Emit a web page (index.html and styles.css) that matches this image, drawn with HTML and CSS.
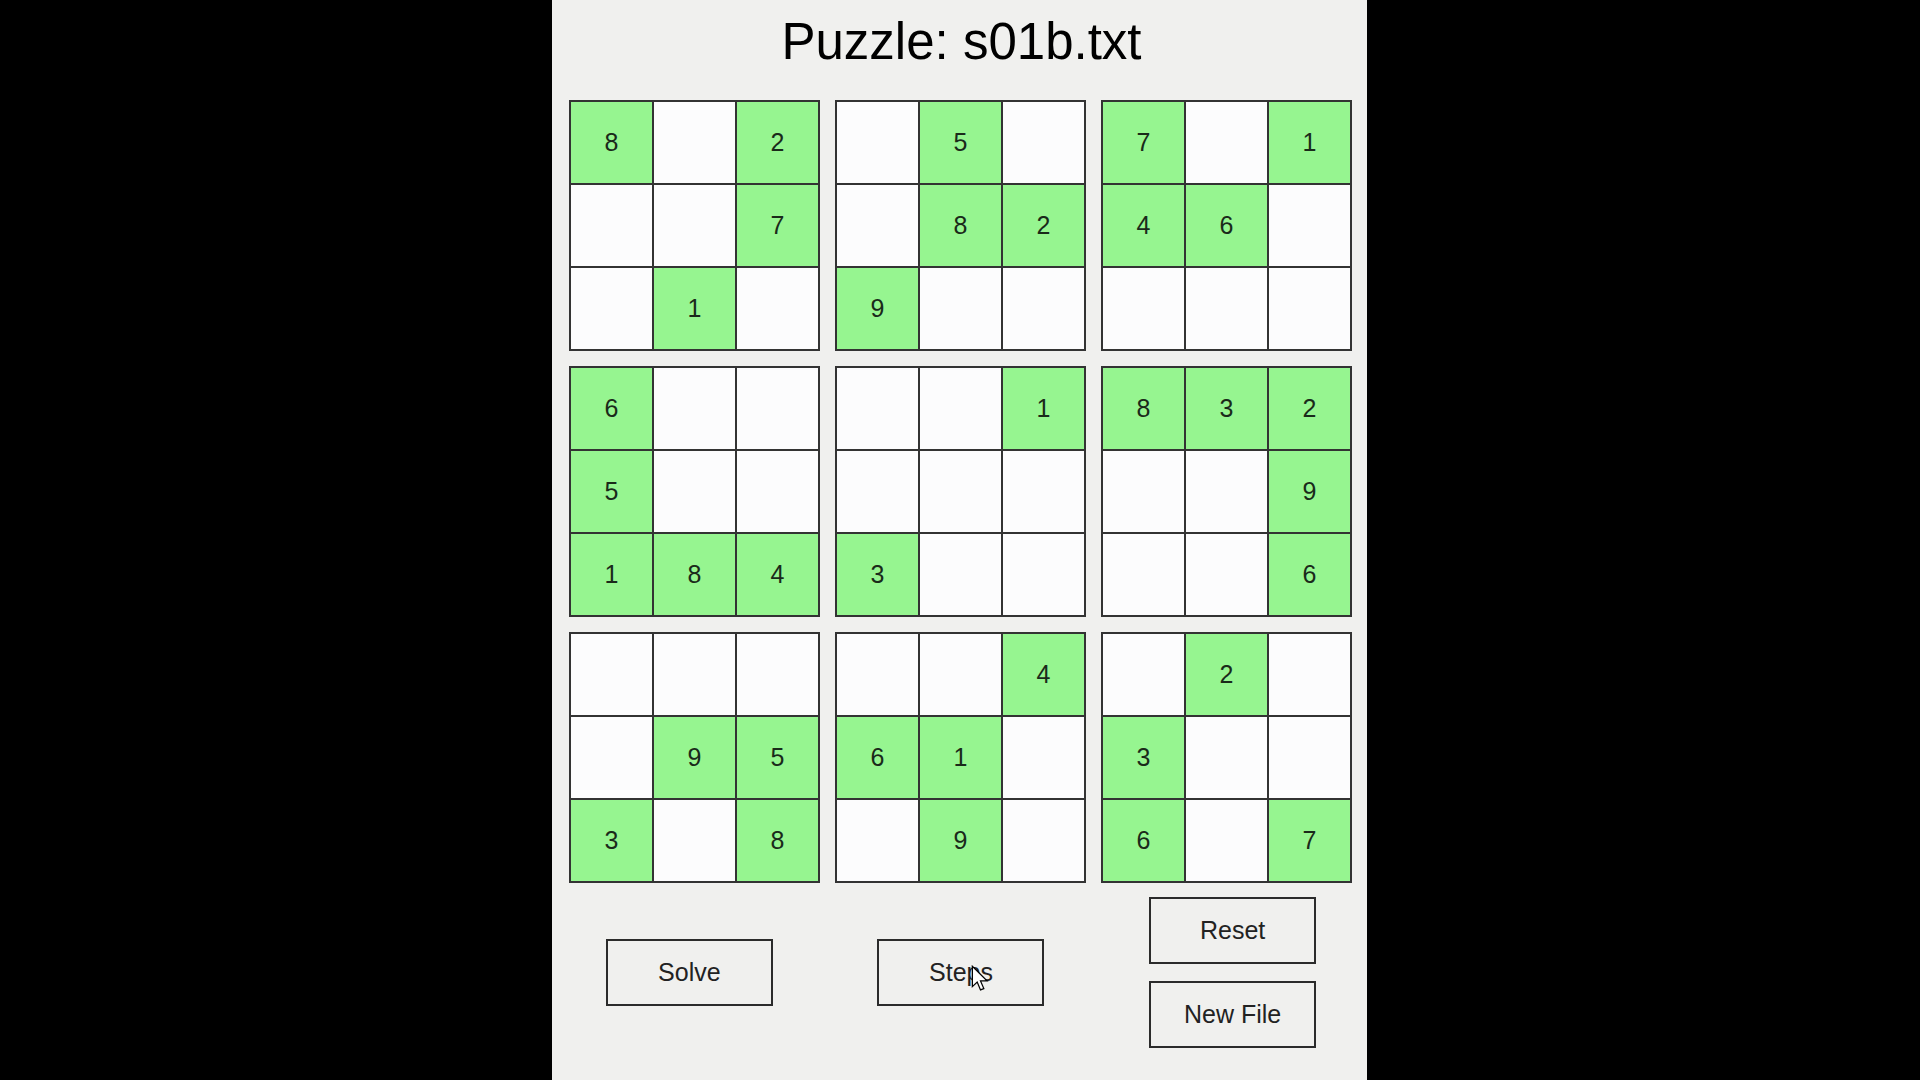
FILE: index.html
```html
<!DOCTYPE html>
<html>
<head>
<meta charset="utf-8">
<title>Puzzle: s01b.txt</title>
<link rel="stylesheet" href="styles.css">
</head>
<body>
<div class="panel">
  <h1 class="title">Puzzle: s01b.txt</h1>
  <div class="board">
    <div class="box">
      <div class="cell given">8</div><div class="cell"></div><div class="cell given">2</div>
      <div class="cell"></div><div class="cell"></div><div class="cell given">7</div>
      <div class="cell"></div><div class="cell given">1</div><div class="cell"></div>
    </div>
    <div class="box">
      <div class="cell"></div><div class="cell given">5</div><div class="cell"></div>
      <div class="cell"></div><div class="cell given">8</div><div class="cell given">2</div>
      <div class="cell given">9</div><div class="cell"></div><div class="cell"></div>
    </div>
    <div class="box">
      <div class="cell given">7</div><div class="cell"></div><div class="cell given">1</div>
      <div class="cell given">4</div><div class="cell given">6</div><div class="cell"></div>
      <div class="cell"></div><div class="cell"></div><div class="cell"></div>
    </div>
    <div class="box">
      <div class="cell given">6</div><div class="cell"></div><div class="cell"></div>
      <div class="cell given">5</div><div class="cell"></div><div class="cell"></div>
      <div class="cell given">1</div><div class="cell given">8</div><div class="cell given">4</div>
    </div>
    <div class="box">
      <div class="cell"></div><div class="cell"></div><div class="cell given">1</div>
      <div class="cell"></div><div class="cell"></div><div class="cell"></div>
      <div class="cell given">3</div><div class="cell"></div><div class="cell"></div>
    </div>
    <div class="box">
      <div class="cell given">8</div><div class="cell given">3</div><div class="cell given">2</div>
      <div class="cell"></div><div class="cell"></div><div class="cell given">9</div>
      <div class="cell"></div><div class="cell"></div><div class="cell given">6</div>
    </div>
    <div class="box">
      <div class="cell"></div><div class="cell"></div><div class="cell"></div>
      <div class="cell"></div><div class="cell given">9</div><div class="cell given">5</div>
      <div class="cell given">3</div><div class="cell"></div><div class="cell given">8</div>
    </div>
    <div class="box">
      <div class="cell"></div><div class="cell"></div><div class="cell given">4</div>
      <div class="cell given">6</div><div class="cell given">1</div><div class="cell"></div>
      <div class="cell"></div><div class="cell given">9</div><div class="cell"></div>
    </div>
    <div class="box">
      <div class="cell"></div><div class="cell given">2</div><div class="cell"></div>
      <div class="cell given">3</div><div class="cell"></div><div class="cell"></div>
      <div class="cell given">6</div><div class="cell"></div><div class="cell given">7</div>
    </div>
  </div>
  <div class="controls">
    <div class="col"><button class="btn">Solve</button></div>
    <div class="col">
      <div class="btn-wrap">
        <button class="btn">Steps</button>
        <svg class="cursor" width="18" height="28" viewBox="0 0 14 22"><path d="M1 1 L1 17 L4.8 13.4 L7.4 19.6 L10 18.5 L7.4 12.5 L12.5 12.5 Z" fill="#fff" stroke="#000" stroke-width="1" stroke-linejoin="miter"/></svg>
      </div>
    </div>
    <div class="col stack">
      <button class="btn">Reset</button>
      <button class="btn">New File</button>
    </div>
  </div>
</div>
</body>
</html>
```
FILE: styles.css
```css
html, body {
  margin: 0;
  padding: 0;
  background: #000;
  height: 100%;
}
body {
  display: flex;
  justify-content: center;
  font-family: "Liberation Sans", Arial, sans-serif;
}
.panel {
  width: 815px;
  height: 1080px;
  margin-right: 1px;
  background: #f0f0ee;
  box-sizing: border-box;
  padding: 0 15px 0 17px;
  display: flex;
  flex-direction: column;
}
.title {
  margin: 0;
  padding-top: 12px;
  height: 100px;
  box-sizing: border-box;
  font-size: 51px;
  font-weight: normal;
  line-height: 60px;
  text-align: center;
  color: #000;
  padding-left: 2px;
}
.board {
  display: grid;
  grid-template-columns: repeat(3, 251px);
  grid-template-rows: repeat(3, 251px);
  gap: 15px 15px;
}
.box {
  display: grid;
  grid-template-columns: repeat(3, 83px);
  grid-template-rows: repeat(3, 83px);
  border: 1px solid #333;
}
.cell {
  border: 1px solid #333;
  background: #fcfcfd;
  display: flex;
  align-items: center;
  justify-content: center;
  font-size: 25px;
  color: #1a2a1a;
}
.cell.given {
  background: #96f590;
}
.controls {
  margin: 14px -15px 0 -17px;
  display: grid;
  grid-template-columns: repeat(3, 1fr);
  align-items: center;
}
.col {
  display: flex;
  flex-direction: column;
  align-items: center;
  justify-content: center;
  gap: 17px;
  padding-left: 3px;
}
.btn-wrap {
  position: relative;
  display: flex;
}
.btn {
  width: 167px;
  height: 67px;
  border: 2px solid #2b2b2b;
  background: transparent;
  font-family: "Liberation Sans", Arial, sans-serif;
  font-size: 25px;
  color: #222;
  padding: 0;
}
.cursor {
  position: absolute;
  left: 94px;
  top: 26px;
}
```
